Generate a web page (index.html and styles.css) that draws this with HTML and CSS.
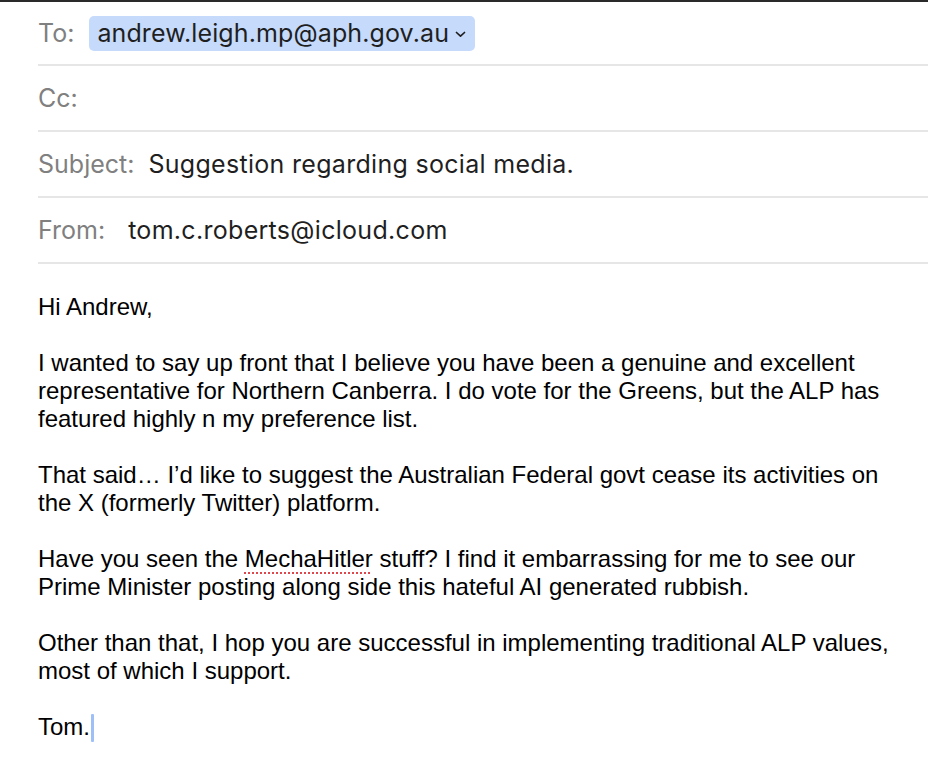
FILE: index.html
```html
<!DOCTYPE html>
<html>
<head>
<meta charset="utf-8">
<link rel="stylesheet" href="styles.css">
</head>
<body>
<div class="topline"></div>
<div class="header">
  <div class="row first">
    <span class="label">To:</span>
    <span class="chip">andrew.leigh.mp@aph.gov.au<svg class="chev" width="11" height="7" viewBox="0 0 11 7"><path d="M1.5 1.5 L5.5 5.2 L9.5 1.5" fill="none" stroke="#1f1f1f" stroke-width="1.7" stroke-linecap="round" stroke-linejoin="round"/></svg></span>
  </div>
  <div class="row">
    <span class="label">Cc:</span>
  </div>
  <div class="row">
    <span class="label">Subject:</span>
    <span class="value subj">Suggestion regarding social media.</span>
  </div>
  <div class="row">
    <span class="label">From:</span>
    <span class="value from">tom.c.roberts@icloud.com</span>
  </div>
</div>
<div class="body">
  <p>Hi Andrew,</p>
  <p>I wanted to say up front that I believe you have been a genuine and excellent<br>representative for Northern Canberra. I do vote for the Greens, but the ALP has<br>featured highly n my preference list.</p>
  <p>That said… I’d like to suggest the Australian Federal govt cease its activities on<br>the X (formerly Twitter) platform.</p>
  <p>Have you seen the <span class="spell">MechaHitler</span> stuff? I find it embarrassing for me to see our<br>Prime Minister posting along side this hateful AI generated rubbish.</p>
  <p>Other than that, I hop you are successful in implementing traditional ALP values,<br>most of which I support.</p>
  <p>Tom.<span class="caret"></span></p>
</div>
</body>
</html>
```
FILE: styles.css
```css
html, body {
  margin: 0;
  padding: 0;
  background: #ffffff;
}
.topline {
  height: 2px;
  background: #2a2a2a;
}
.header {
  padding-left: 38px;
  font-family: "Inter", "Roboto", sans-serif;
  font-size: 25px;
}
.row {
  height: 64px;
  border-bottom: 2px solid #e6e6e6;
  display: flex;
  align-items: center;
}
.row.first {
  height: 62px;
}
.label {
  color: #808080;
}
.chip {
  display: inline-flex;
  align-items: center;
  margin-left: 15px;
  height: 35px;
  padding: 0 9px 0 8px;
  background: #c6dafc;
  border-radius: 5px;
  color: #1f1f1f;
  letter-spacing: 0.12px;
}
.chev {
  margin-left: 6px;
  margin-top: 2px;
}
.value {
  color: #1f1f1f;
  letter-spacing: 0.3px;
}
.subj {
  margin-left: 14px;
}
.from {
  margin-left: 23px;
}
.body {
  padding: 29px 0 0 38px;
  font-family: "Liberation Sans", Arial, sans-serif;
  font-size: 24px;
  line-height: 28px;
  color: #000000;
}
.body p {
  margin: 0 0 28px 0;
}
.spell {
  text-decoration: underline dotted #e0474c;
  text-decoration-thickness: 2px;
  text-underline-offset: 5px;
}
.caret {
  display: inline-block;
  width: 3px;
  height: 28px;
  background: #9ec0f7;
  vertical-align: -7px;
  margin-left: 1px;
  border-radius: 1px;
}
```
